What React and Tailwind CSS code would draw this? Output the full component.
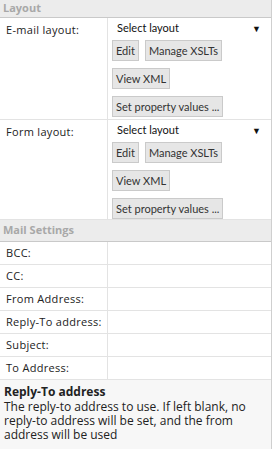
import React from 'react';

const font = { fontFamily: '"Open Sans", "Noto Sans", sans-serif' };
const narrow = { fontFamily: 'Lato, "Open Sans", sans-serif' };

const Btn = ({ children }) => (
  <button
    className="h-[21px] px-[3px] bg-[#e6e6e6] border border-[#cacaca] text-[11px] leading-none text-[#333]"
    style={narrow}
  >
    {children}
  </button>
);

const SectionHeader = ({ title, className = '' }) => (
  <div className={`flex items-center pl-[3px] bg-[#ececec] border-b border-[#c9c9c9] text-[11px] font-bold text-[#a8a8a8] ${className}`}>
    {title}
  </div>
);

const LayoutRow = ({ label, className = '' }) => (
  <div className={`grid grid-cols-[108px_1fr] border-b border-[#e3e3e3] ${className}`}>
    <div className="border-r border-[#e3e3e3] pl-[6px] pt-[4px] text-[11px] text-[#222] tracking-[0.3px]">{label}</div>
    <div className="pl-[4px] pr-[10px]">
      <div className="flex items-center justify-between h-[21px] pl-[5px] text-[11px] text-[#111]" style={narrow}>
        <span>Select layout</span>
        <span className="text-[9px]">▼</span>
      </div>
      <div className="flex flex-col items-start gap-[7px] pt-[1px]">
        <div className="flex gap-[6px]">
          <Btn>Edit</Btn>
          <Btn>Manage XSLTs</Btn>
        </div>
        <Btn>View XML</Btn>
        <Btn>Set property values ...</Btn>
      </div>
    </div>
  </div>
);

const FieldRow = ({ label }) => (
  <div className="grid grid-cols-[108px_1fr] h-[23px] border-b border-[#e3e3e3]">
    <div className="flex items-center border-r border-[#e3e3e3] pl-[6px] text-[11px] text-[#222] tracking-[0.3px]">{label}</div>
    <div />
  </div>
);

export default function App() {
  return (
    <div className="w-[275px] h-[449px] bg-white overflow-hidden" style={font}>
      <div className="w-[272px] h-full border-r border-[#cfcfcf] flex flex-col">
        <SectionHeader title="Layout" className="h-[18px]" />
        <LayoutRow label="E-mail layout:" className="h-[102px]" />
        <LayoutRow label="Form layout:" className="h-[100px]" />
        <SectionHeader title="Mail Settings" className="h-[22px]" />
        {['BCC:', 'CC:', 'From Address:', 'Reply-To address:', 'Subject:', 'To Address:'].map((l) => (
          <FieldRow key={l} label={l} />
        ))}
        <div className="flex-1 bg-[#f7f7f7] px-[4px] pt-[4px] text-[12px] text-[#222]">
          <div className="font-bold leading-[15px] mb-[1px]">Reply-To address</div>
          <div className="leading-[14px]">The reply-to address to use. If left blank, no reply-to address will be set, and the from address will be used</div>
        </div>
      </div>
    </div>
  );
}
